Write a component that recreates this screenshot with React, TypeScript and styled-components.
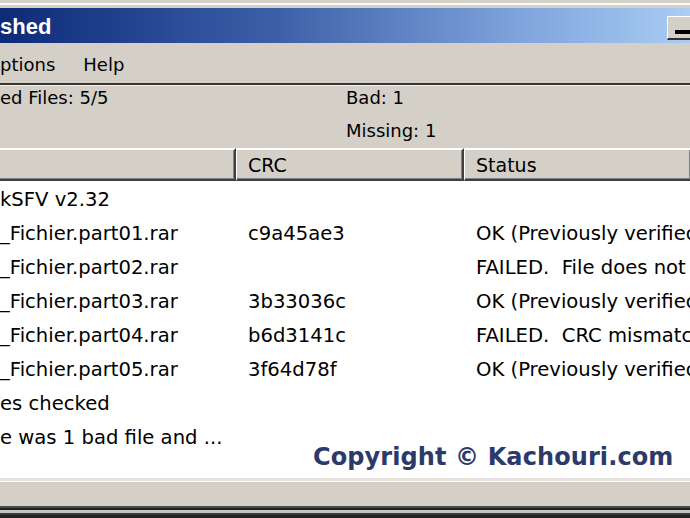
import styled, { createGlobalStyle } from 'styled-components'

const GlobalStyle = createGlobalStyle`
    html, body {
        margin: 0;
        padding: 0;
        overflow: hidden;
        background: #d4d0c8;
    }
`

// columns of the list view, shared by header and rows
const COLUMNS = '236px 228px 1fr'

interface FileRow {
    name: string
    crc?: string
    status?: string
}

const rows: FileRow[] = [
    { name: 'kSFV v2.32' },
    { name: '_Fichier.part01.rar', crc: 'c9a45ae3', status: 'OK (Previously verified)' },
    { name: '_Fichier.part02.rar', status: 'FAILED.  File does not exist' },
    { name: '_Fichier.part03.rar', crc: '3b33036c', status: 'OK (Previously verified)' },
    { name: '_Fichier.part04.rar', crc: 'b6d3141c', status: 'FAILED.  CRC mismatch' },
    { name: '_Fichier.part05.rar', crc: '3f64d78f', status: 'OK (Previously verified)' },
    { name: 'es checked' },
    { name: 'e was 1 bad file and ...' },
]

const App = () => {
    return (
        <>
            <GlobalStyle />
            <Window>
                <TopEdge />
                <TitleBar>
                    <Title>shed</Title>
                    <MinButton>
                        <MinGlyph />
                    </MinButton>
                </TitleBar>
                <MenuBar>
                    <MenuItem>ptions</MenuItem>
                    <MenuItem $gap>Help</MenuItem>
                </MenuBar>
                <InfoPanel>
                    <Info>ed Files: 5/5</Info>
                    <Info>Bad: 1</Info>
                    <Info />
                    <Info>Missing: 1</Info>
                </InfoPanel>
                <Header>
                    <HeaderCell />
                    <HeaderCell>CRC</HeaderCell>
                    <HeaderCell>Status</HeaderCell>
                </Header>
                <List>
                    {rows.map((r, i) => (
                        <Row key={i}>
                            <Cell $first>{r.name}</Cell>
                            <Cell>{r.crc}</Cell>
                            <Cell>{r.status}</Cell>
                        </Row>
                    ))}
                    <Watermark>Copyright © Kachouri.com</Watermark>
                </List>
                <StatusStrip />
                <BottomEdge />
            </Window>
        </>
    )
}

const Window = styled.div`
    width: 690px;
    height: 518px;
    display: flex;
    flex-direction: column;
    background: #d4d0c8;
    overflow: hidden;
    font-family: "DejaVu Sans", Verdana, sans-serif;
    color: #000;
`

const TopEdge = styled.div`
    height: 8px;
    flex-shrink: 0;
    background: linear-gradient(to bottom, #d4d0c8 0 3px, #fbfbfa 3px 5px, #d4d0c8 5px);
`

const TitleBar = styled.div`
    height: 35px;
    flex-shrink: 0;
    display: flex;
    align-items: center;
    justify-content: space-between;
    background: linear-gradient(to right, #0c2a78 0%, #3d5fa8 40%, #7fa3dc 75%, #a9cdf3 100%);
`

const Title = styled.span`
    font-family: "Liberation Sans", Arial, sans-serif;
    font-weight: bold;
    font-size: 22px;
    color: #fff;
    margin-top: 2px;
`

const MinButton = styled.div`
    width: 26px;
    height: 24px;
    margin-top: 4px;
    margin-right: -3px;
    background: #d4d0c8;
    border-top: 1px solid #fff;
    border-left: 1px solid #fff;
    border-bottom: 2px solid #303030;
    display: flex;
    align-items: flex-end;
    padding: 0 0 4px 7px;
    box-sizing: border-box;
`

const MinGlyph = styled.div`
    width: 16px;
    height: 4px;
    background: #000;
`

const MenuBar = styled.div`
    height: 42px;
    flex-shrink: 0;
    display: flex;
    align-items: center;
    font-size: 18px;
    border-bottom: 2px solid #353535;
    box-sizing: border-box;
    padding-top: 2px;
`

const MenuItem = styled.span<{ $gap?: boolean }>`
    margin-left: ${p => (p.$gap ? '28px' : '0')};
`

const InfoPanel = styled.div`
    height: 63px;
    flex-shrink: 0;
    display: grid;
    grid-template-columns: 346px 1fr;
    grid-auto-rows: 22px;
    row-gap: 11px;
    align-content: start;
    padding-top: 1px;
    font-size: 18px;
    line-height: 22px;
    border-top: 1px solid #f4f3f0;
    box-sizing: border-box;
`

const Info = styled.div`
    white-space: nowrap;
`

const Header = styled.div`
    height: 33px;
    flex-shrink: 0;
    display: grid;
    grid-template-columns: ${COLUMNS};
    font-size: 19px;
`

const HeaderCell = styled.div`
    display: flex;
    align-items: center;
    padding-left: 11px;
    border-top: 2px solid #fff;
    border-left: 1px solid #fff;
    border-right: 2px solid #404040;
    border-bottom: 2px solid #404040;
    box-shadow: inset -1px -1px 0 #808080;
    &:first-child {
        border-left: none;
    }
    &:last-child {
        border-right: none;
    }
`

const List = styled.div`
    position: relative;
    flex: 1;
    background: #fff;
    padding-top: 1px;
    font-size: 19.6px;
    border-bottom: 3px solid #e6e3de;
    overflow: hidden;
`

const Row = styled.div`
    height: 34px;
    display: grid;
    grid-template-columns: ${COLUMNS};
    align-items: center;
`

const Cell = styled.div<{ $first?: boolean }>`
    padding-left: ${p => (p.$first ? '0' : '12px')};
    white-space: pre;
    overflow: ${p => (p.$first ? 'visible' : 'hidden')};
`

const Watermark = styled.div`
    position: absolute;
    left: 313px;
    top: 261px;
    font-family: "DejaVu Sans", Verdana, sans-serif;
    font-weight: bold;
    font-size: 24px;
    line-height: 30px;
    letter-spacing: 0.1px;
    color: #2c3a6a;
    white-space: nowrap;
`

const StatusStrip = styled.div`
    height: 25px;
    flex-shrink: 0;
    background: #d4d0c8;
    border-top: 1px solid #fff;
    box-sizing: border-box;
`

const BottomEdge = styled.div`
    height: 12px;
    flex-shrink: 0;
    background: linear-gradient(to bottom, #4a4a4a 0 2px, #222 2px 4px, #c6c3bc 4px 7px, #3a3a3a 7px 9px, #222 9px);
`

export default App
